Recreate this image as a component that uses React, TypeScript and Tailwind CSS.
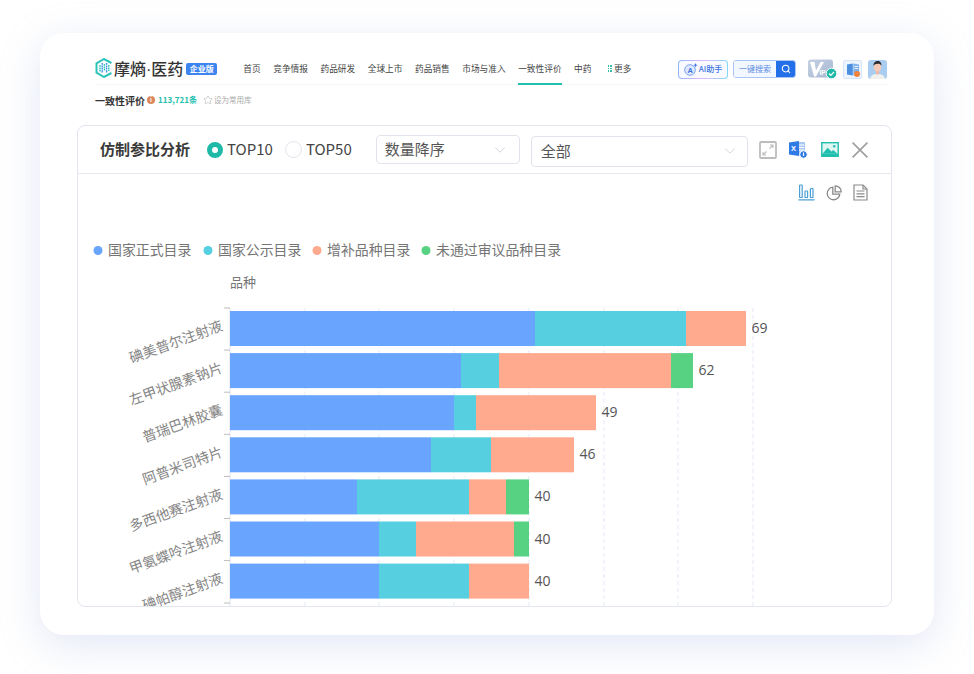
import { Search, ChevronDown, Star } from "lucide-react";

const font = { fontFamily: '"Noto Sans CJK SC", "Noto Sans", sans-serif' };

const navItems = ["首页", "竞争情报", "药品研发", "全球上市", "药品销售", "市场与准入", "一致性评价", "中药"];

const colors = ["#69a5ff", "#56d0e0", "#ffaa8f", "#57d283"];

const legend = [
  { name: "国家正式目录", color: colors[0] },
  { name: "国家公示目录", color: colors[1] },
  { name: "增补品种目录", color: colors[2] },
  { name: "未通过审议品种目录", color: colors[3] },
];

// stop positions in px (from the chart's left edge) for each bar
const rows = [
  { name: "碘美普尔注射液", total: 69, stops: [535, 686, 746] },
  { name: "左甲状腺素钠片", total: 62, stops: [461, 499, 671, 693] },
  { name: "普瑞巴林胶囊", total: 49, stops: [454, 476, 596] },
  { name: "阿普米司特片", total: 46, stops: [431, 491, 574] },
  { name: "多西他赛注射液", total: 40, stops: [357, 469, 506, 529] },
  { name: "甲氨蝶呤注射液", total: 40, stops: [379, 416, 514, 529] },
  { name: "碘帕醇注射液", total: 40, stops: [379, 469, 529] },
];

const gridX = [305, 379, 454, 529, 604, 678, 753];
const X0 = 230;
const TOP = 174; // svg starts right below the panel header

function Chart() {
  return (
    <svg width="813" height="432" viewBox={`78 ${TOP} 813 432`} className="block absolute left-0 top-0" style={font}>
      {legend.map((l, i) => {
        const xs = [98, 208, 317, 426];
        return (
          <g key={l.name}>
            <circle cx={xs[i]} cy={250.5} r={4.5} fill={l.color} />
            <text x={xs[i] + 10} y={254.5} fontSize="13.900" fill="#757575">{l.name}</text>
          </g>
        );
      })}
      <text x={230} y={287} fontSize="13" fill="#757575">品种</text>

      {gridX.map(x => (
        <line key={x} x1={x} x2={x} y1={308} y2={606} stroke="#e4e9f5" strokeDasharray="4 3" />
      ))}
      <line x1={X0} x2={X0} y1={308} y2={606} stroke="#dfe3ee" />

      {rows.map((r, i) => {
        const y = 311 + i * 42.1;
        return (
          <g key={r.name}>
            {r.stops.map((s, j) => {
              const from = j === 0 ? X0 : r.stops[j - 1];
              return <rect key={j} x={from} y={y} width={s - from} height={35} fill={colors[j === 3 ? 3 : j]} />;
            })}
            <text x={r.stops[r.stops.length - 1] + 5.5} y={y + 22} fontSize="14" fill="#555555" fontFamily='"Open Sans", sans-serif'>{r.total}</text>
            <line x1={224} x2={230} y1={y - 3} y2={y - 3} stroke="#bdbdbd" />
            <text
              x={222}
              y={y + 19}
              fontSize="14"
              fill="#858585"
              textAnchor="end"
              transform={`rotate(-20 222 ${y + 14})`}
            >
              {r.name}
            </text>
          </g>
        );
      })}
      <line x1={224} x2={230} y1={603} y2={603} stroke="#bdbdbd" />
    </svg>
  );
}

function LogoMark() {
  return (
    <svg width="18" height="20" viewBox="0 0 18 20" fill="none">
      <path d="M16.400 5 9 1 1.500 5.300V14.700L9 19 16.400 15" stroke="#2cc4b8" strokeWidth="2" />
      {[5, 7.2, 9.4, 11.6, 13.8].map((x, i) => (
        <line key={x} x1={x} x2={x} y1={[7, 5, 6, 5, 7][i]} y2={[14, 15, 13, 15, 13][i]} stroke={i % 2 ? "#3b8ff0" : "#2cc4b8"} strokeWidth="1.400" strokeDasharray="1.800 .6" />
      ))}
    </svg>
  );
}

function AiMark() {
  return (
    <svg width="14" height="13" viewBox="0 0 14 13" fill="none">
      <circle cx="6" cy="7" r="5.300" fill="#dfe8fd" stroke="#7ea4f2" />
      <text x="3.400" y="9.700" fontSize="7.500" fontWeight="700" fill="#3d74e0" fontFamily='"Liberation Sans", sans-serif'>A</text>
      <path d="M11.500 0l.6 1.600 1.600.6-1.600.6-.6 1.600-.6-1.600-1.600-.6 1.600-.6z" fill="#3d74e0" />
    </svg>
  );
}

function VipBadge() {
  return (
    <svg width="29" height="20" viewBox="0 0 29 20">
      <defs>
        <linearGradient id="vipg" x1="0" y1="0" x2="1" y2="1">
          <stop offset="0" stopColor="#c5d0e2" />
          <stop offset="1" stopColor="#a6b7d2" />
        </linearGradient>
      </defs>
      <rect x="0" y="0.500" width="25" height="18" rx="3" fill="url(#vipg)" />
      <path d="M2 3h4.500l1.500 8.500L12.500 3h3.500L8 17.500H6z" fill="#fff" />
      <text x="11.500" y="15.500" fontSize="6.500" fill="#fff" fontFamily='"Liberation Sans", sans-serif' fontWeight="700">IP</text>
      <circle cx="23.500" cy="14.500" r="5.300" fill="#1fb9a8" stroke="#fff" />
      <path d="M21 14.500l1.800 1.800 3.200-3.300" stroke="#fff" strokeWidth="1.200" fill="none" />
    </svg>
  );
}

function BookIcon() {
  return (
    <div className="w-[19px] h-[19px] rounded-[2px] bg-[#eef4fd] border border-[#d6e4f8] flex items-center justify-center relative">
      <svg width="14" height="13" viewBox="0 0 14 13">
        <path d="M1 1.500 6.800.5v12L1 11.500z" fill="#4a8fe0" />
        <path d="M7.300 .5 13 1.500v10l-5.700 1z" fill="#7fb2ec" />
        <path d="M8.300 3.500h3.800M8.300 5.500h3.800" stroke="#fff" strokeWidth=".8" />
      </svg>
      <span className="absolute right-[1px] bottom-[1px] w-[6px] h-[6px] rounded-full bg-[#f0833c]" />
    </div>
  );
}

function Avatar() {
  return (
    <svg width="19" height="19" viewBox="0 0 19 19">
      <rect width="19" height="19" rx="3" fill="#a9cdf1" />
      <path d="M2 19c.5-4 3.500-5 7.500-5s7 1 7.500 5z" fill="#eef1ee" />
      <rect x="8" y="10.500" width="3" height="4" fill="#f0b9a5" />
      <ellipse cx="9.500" cy="7" rx="3.600" ry="4.500" fill="#f6c9b6" />
      <path d="M5.600 6C5.200 2.500 7.500 1 9.800 1s3.900 1.500 3.600 5c-.6-1.700-1.500-2.300-3.700-2.300S6.300 4.500 5.600 6z" fill="#2a2a2e" />
    </svg>
  );
}

function ExpandIcon() {
  return (
    <svg width="18" height="18" viewBox="0 0 18 18" fill="none" stroke="#bdbdbd">
      <rect x="1" y="1" width="16" height="16" rx="1" strokeWidth="1.800" />
      <path d="M10.500 7.500 14 4M11 4h3v3M7.500 10.500 4 14M4 11v3h3" strokeWidth="1.100" />
    </svg>
  );
}

function ExcelIcon() {
  return (
    <svg width="20" height="19" viewBox="0 0 20 19">
      <path d="M7 2h10v13H7z" fill="#a9c9f3" />
      <path d="M11 5h5M11 7.500h5M11 10h5" stroke="#fff" strokeWidth="1" />
      <path d="M1 2.500 11 1v15L1 14.500z" fill="#2f7ae5" />
      <text x="3" y="11" fontSize="7.500" fontWeight="700" fill="#fff" fontFamily='"Liberation Sans", sans-serif'>X</text>
      <circle cx="15.500" cy="14.500" r="3.800" fill="#2f7ae5" stroke="#fff" />
      <path d="M15.500 12.500v3.500" stroke="#fff" strokeWidth="1.200" fill="none" />
    </svg>
  );
}

function ImageIcon() {
  return (
    <svg width="18" height="15" viewBox="0 0 19 16">
      <rect width="19" height="16" fill="#20bfae" />
      <rect x="1.500" y="1.500" width="16" height="11" fill="#dff6f3" />
      <path d="M1.500 12.500 7 6l4 4 2-1.500 4.500 4z" fill="#20bfae" />
      <circle cx="14" cy="4.500" r="1.300" fill="#20bfae" />
    </svg>
  );
}

function CloseIcon() {
  return (
    <svg width="16" height="16" viewBox="0 0 16 16" fill="none" stroke="#a0a0a0" strokeWidth="1.700">
      <path d="M.6.6 15.400 15.400M15.400.6.6 15.400" />
    </svg>
  );
}

function BarsIcon() {
  return (
    <svg width="17" height="17" viewBox="0 0 17 17" fill="none" stroke="#4a9fd4" strokeWidth="1.200">
      <rect x="1.600" y="1" width="2.600" height="12.500" rx=".6" />
      <rect x="7" y="7" width="2.600" height="6.500" rx=".6" />
      <rect x="12.400" y="4.500" width="2.600" height="9" rx=".6" />
      <path d="M.5 15.800H16.500" />
    </svg>
  );
}

function PieIcon() {
  return (
    <svg width="16" height="16" viewBox="0 0 16 16" fill="none" stroke="#8a8a8a" strokeWidth="1.300">
      <path d="M6.800 2.200a6.300 6.300 0 1 0 7 7H6.800z" />
      <path d="M9.200 .8a6 6 0 0 1 6 6h-6z" />
    </svg>
  );
}

function DocIcon() {
  return (
    <svg width="15" height="17" viewBox="0 0 15 17" fill="none" stroke="#8a8a8a" strokeWidth="1.200">
      <path d="M1 1h9l4 4v11H1z" />
      <path d="M10 1v4h4M3.500 7h8M3.500 9.800h8M3.500 12.600h8" />
    </svg>
  );
}

export default function App() {
  return (
    <div className="w-[974px] h-[674px] bg-white overflow-hidden pt-[33px] px-[40px]" style={font}>
      <div className="w-[894px] h-[602px] rounded-[24px] bg-white shadow-[0_10px_40px_rgba(150,170,215,0.28)] pt-[19px] pl-[37px] pr-[43px]">
        {/* top nav */}
        <div className="h-[33px] ml-[18px] w-[792px] border-b border-[#f5f5f5] flex items-center">
          <LogoMark />
          <span className="ml-[1px] text-[16px] leading-none font-medium text-[#333] whitespace-nowrap mt-[2px]">
            摩熵<span style={{ fontFamily: '"Liberation Sans", sans-serif' }}>·</span>医药
          </span>
          <span className="ml-[3px] w-[31px] h-[12px] mt-[1px] rounded-[2px] bg-[#3d84f0] text-white text-[8px] leading-[12px] font-bold text-center whitespace-nowrap">企业版</span>
          <nav className="ml-[26px] flex items-center gap-[12.500px] h-full">
            {navItems.map(n => (
              <span
                key={n}
                className={`h-full flex items-center pt-[2px] text-[8.700px] whitespace-nowrap text-[#444] border-b-2 -mb-[1px] ${n === "一致性评价" ? "border-[#20bfb0]" : "border-transparent"}`}
              >
                {n}
              </span>
            ))}
            <span className="flex items-center gap-[2px] text-[8.700px] text-[#444] ml-[4px] whitespace-nowrap pt-[1px]">
              <span className="grid grid-cols-2 gap-[1px]">
                {[0, 1, 2, 3, 4, 5].map(i => <i key={i} className="block w-[1.500px] h-[1.500px] bg-[#35bfae]" />)}
              </span>
              更多
            </span>
          </nav>
          <div className="ml-auto mt-[2px] h-[19px] w-[50px] rounded-[4px] p-[1px] bg-linear-to-r from-[#8fb4f5] via-[#e0b8f5] to-[#7fd8f5]">
            <div className="h-full rounded-[3px] bg-[#f8faff] flex items-center justify-center gap-[1px] text-[#3d74e0] text-[8px] font-medium whitespace-nowrap">
              <AiMark />
              AI助手
            </div>
          </div>
          <div className="ml-[5px] mt-[2px] h-[18px] w-[63px] rounded-[3px] border border-[#a9c6f5] flex items-center overflow-hidden">
            <span className="flex-1 text-center text-[8px] text-[#5a8be0] bg-[#f3f7ff] leading-[16px] whitespace-nowrap">一键搜索</span>
            <span className="w-[19px] h-full bg-[#2470e8] flex items-center justify-center">
              <Search className="w-[10px] h-[10px] text-white" strokeWidth={2.5} />
            </span>
          </div>
          <div className="ml-[12px] mt-[2px]"><VipBadge /></div>
          <div className="ml-[6px] mt-[2px]"><BookIcon /></div>
          <div className="ml-[6px] mt-[2px]"><Avatar /></div>
        </div>

        {/* sub header */}
        <div className="ml-[18px] mt-[4px] h-[22px] flex items-center">
          <span className="text-[10px] font-bold text-[#333]">一致性评价</span>
          <span className="ml-[2px] w-[8px] h-[8px] rounded-full bg-[#d9885c] text-white text-[6px] leading-[8px] text-center font-bold">i</span>
          <span className="ml-[3px] text-[8px] font-bold text-[#22bfae]">113,721条</span>
          <Star className="ml-[6px] w-[10px] h-[10px] text-[#aaa]" strokeWidth={1.3} />
          <span className="ml-[1px] text-[7.500px] text-[#aaa]">设为常用库</span>
        </div>

        {/* panel */}
        <div className="mt-[14px] w-[815px] h-[482px] border border-[#e4e6ef] rounded-[8px] overflow-hidden bg-white">
          <div className="h-[48px] border-b border-[#e6e8f0] flex items-center pl-[22px]">
            <span className="text-[15px] font-bold text-[#3a3a3a] whitespace-nowrap">仿制参比分析</span>
            <span className="ml-[17px] w-[16px] h-[16px] rounded-full border-[5px] border-[#1fb9a8] bg-white" />
            <span className="ml-[4px] text-[15px] text-[#444]">TOP10</span>
            <span className="ml-[12px] w-[17px] h-[17px] rounded-full border border-[#e2e4ec] bg-white" />
            <span className="ml-[4px] text-[15px] text-[#444]">TOP50</span>
            <div className="ml-[24px] w-[144px] h-[29px] rounded-[4px] border border-[#e2e4ec] flex items-center justify-between pl-[8px] pr-[10px] text-[15px] text-[#555]">
              数量降序
              <ChevronDown className="w-[18px] h-[18px] text-[#c4c7d0]" strokeWidth={1} />
            </div>
            <div className="ml-[11px] mt-[3px] w-[217px] h-[31px] rounded-[4px] border border-[#e2e4ec] flex items-center justify-between pl-[9px] pr-[8px] text-[15px] text-[#555]">
              全部
              <ChevronDown className="w-[18px] h-[18px] text-[#c4c7d0]" strokeWidth={1} />
            </div>
            <div className="ml-[11px]"><ExpandIcon /></div>
            <div className="ml-[11px]"><ExcelIcon /></div>
            <div className="ml-[13px]"><ImageIcon /></div>
            <div className="ml-[13px]"><CloseIcon /></div>
          </div>
          <div className="relative h-[432px]">
            <Chart />
            <div className="relative flex justify-end items-center gap-[11px] pt-[10px] pr-[23px]">
              <BarsIcon />
              <PieIcon />
              <DocIcon />
            </div>
          </div>
        </div>
      </div>
    </div>
  );
}
